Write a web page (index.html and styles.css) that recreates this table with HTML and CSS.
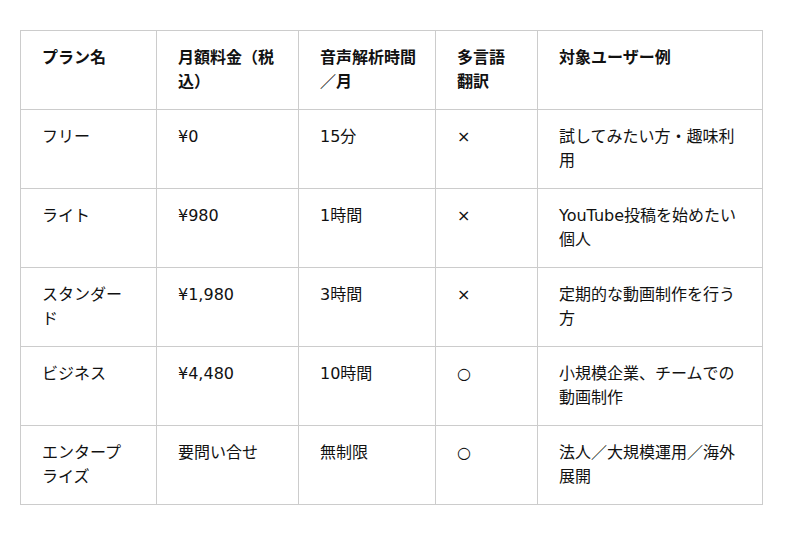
FILE: index.html
```html
<!DOCTYPE html>
<html lang="ja">
<head>
<meta charset="utf-8">
<link rel="stylesheet" href="styles.css">
</head>
<body>
<table class="plans">
  <colgroup>
    <col class="c1"><col class="c2"><col class="c3"><col class="c4"><col class="c5">
  </colgroup>
  <thead>
    <tr><th>プラン名</th><th>月額料金（税込）</th><th>音声解析時間／月</th><th>多言語翻訳</th><th>対象ユーザー例</th></tr>
  </thead>
  <tbody>
    <tr><td>フリー</td><td>¥0</td><td>15分</td><td>×</td><td>試してみたい方・趣味利用</td></tr>
    <tr><td>ライト</td><td>¥980</td><td>1時間</td><td>×</td><td>YouTube投稿を始めたい個人</td></tr>
    <tr><td>スタンダード</td><td>¥1,980</td><td>3時間</td><td>×</td><td>定期的な動画制作を行う方</td></tr>
    <tr><td>ビジネス</td><td>¥4,480</td><td>10時間</td><td>○</td><td>小規模企業、チームでの動画制作</td></tr>
    <tr><td>エンタープライズ</td><td>要問い合せ</td><td>無制限</td><td>○</td><td>法人／大規模運用／海外展開</td></tr>
  </tbody>
</table>
</body>
</html>
```
FILE: styles.css
```css
html, body { margin: 0; background: #fff; }
body {
  padding: 30px 20px;
  font-family: "DejaVu Sans", "Noto Sans CJK JP", sans-serif;
  font-size: 16px;
  line-height: 24px;
  color: #111111;
}
.plans {
  border-collapse: collapse;
  table-layout: fixed;
  width: 742px;
}
.c1 { width: 136px; }
.c2 { width: 142px; }
.c3 { width: 137px; }
.c4 { width: 102px; }
.c5 { width: 225px; }
.plans th, .plans td {
  border: 1px solid #cccccc;
  padding: 15px 19px 15px 21px;
  text-align: left;
  vertical-align: top;
  height: 48px;
}
.plans th { font-weight: bold; }
```
